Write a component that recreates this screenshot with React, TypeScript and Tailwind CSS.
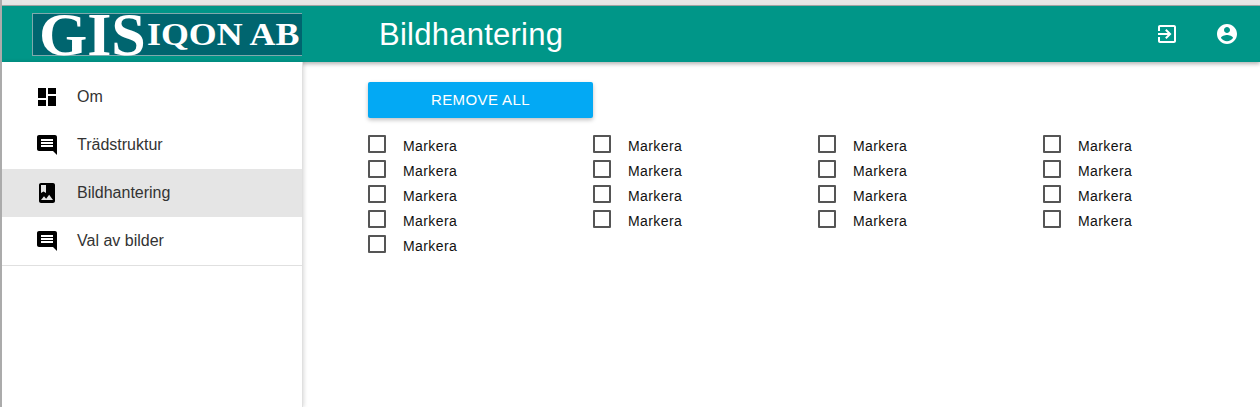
const dash = "M3 13h8V3H3v10zm0 8h8v-6H3v6zm10 0h8V11h-8v10zm0-18v6h8V3h-8z";
const msg = "M20 2H4c-1.1 0-1.99.9-1.99 2L2 22l4-4h14c1.1 0 2-.9 2-2V4c0-1.1-.9-2-2-2zm-2 12H6v-2h12v2zm0-3H6V9h12v2zm0-3H6V6h12v2z";
const album = "M18 2H6c-1.1 0-2 .9-2 2v16c0 1.1.9 2 2 2h12c1.1 0 2-.9 2-2V4c0-1.1-.9-2-2-2zM6 4h5v8l-2.5-1.5L6 12V4zm0 15l3-3.86 2.14 2.58 3-3.86L18 19H6z";
const exit = "M10.09 15.59L11.5 17l5-5-5-5-1.41 1.41L12.67 11H3v2h9.67l-2.58 2.59zM19 3H5c-1.11 0-2 .9-2 2v4h2V5h14v14H5v-4H3v4c0 1.1.89 2 2 2h14c1.1 0 2-.9 2-2V5c0-1.1-.9-2-2-2z";
const account = "M12 2C6.48 2 2 6.48 2 12s4.48 10 10 10 10-4.48 10-10S17.52 2 12 2zm0 3c1.66 0 3 1.34 3 3s-1.34 3-3 3-3-1.34-3-3 1.34-3 3-3zm0 14.2c-2.5 0-4.71-1.28-6-3.22.03-1.99 4-3.08 6-3.08 1.99 0 5.97 1.09 6 3.08-1.29 1.94-3.5 3.22-6 3.22z";

function Icon({ d, flip, cls }: { d: string; flip?: boolean; cls: string }) {
  return (
    <svg viewBox="0 0 24 24" className={`w-6 h-6 shrink-0 ${flip ? "-scale-x-100" : ""} ${cls}`} fill="currentColor">
      <path d={d} />
    </svg>
  );
}

const nav = [
  { label: "Om", d: dash, flip: false },
  { label: "Trädstruktur", d: msg, flip: true },
  { label: "Bildhantering", d: album, flip: false, active: true },
  { label: "Val av bilder", d: msg, flip: true },
];

export default function App() {
  return (
    <div className="h-[407px] w-[1260px] overflow-hidden bg-white flex flex-col border-l-2 border-[#ababab] font-['Liberation_Sans',sans-serif]">
      <div className="h-[6px] bg-[#e6e6e6] border-b border-[#a8a8a8] shrink-0" />
      <header className="relative z-10 h-[56px] shrink-0 bg-[#009688] flex items-center shadow-[0_2px_4px_rgba(0,0,0,0.3)]">
        <div className="ml-[30px] w-[270px] h-[43px] bg-[#00656f] border border-[#7fa9ad] border-r-0 flex items-center pl-[6px] font-['Liberation_Serif',serif] text-white whitespace-nowrap">
          <span className="text-[62px] font-bold leading-[41px]">GIS</span>
          <span className="text-[32px] leading-[41px] ml-[1px] origin-left scale-x-[1.12] font-bold">IQON AB</span>
        </div>
        <h1 className="ml-[77px] text-[31px] text-white leading-none tracking-[0.25px]">Bildhantering</h1>
        <div className="ml-auto flex items-center gap-[36px] pr-[21px] text-white">
          <Icon d={exit} cls="" />
          <Icon d={account} cls="" />
        </div>
      </header>
      <div className="flex flex-1 min-h-0">
        <aside className="relative z-20 w-[301px] border-r border-[#e0e0e0] shadow-[1px_0_4px_rgba(0,0,0,0.15)] bg-white pt-[11px] shrink-0">
          <nav className="border-b border-[#e0e0e0]">
            {nav.map((n) => (
              <div key={n.label} className={`h-[48px] flex items-center pl-[33px] ${n.active ? "bg-[#e5e5e5]" : ""}`}>
                <Icon d={n.d} flip={n.flip} cls="text-black" />
                <span className="ml-[18px] text-[16px] text-[#333]">{n.label}</span>
              </div>
            ))}
          </nav>
        </aside>
        <main className="pl-[65px] pt-[20px]">
          <button className="w-[225px] h-[36px] bg-[#03a9f4] rounded-[2px] text-white text-[15px] tracking-[0.4px] shadow-[0_2px_4px_rgba(0,0,0,0.25)]">
            REMOVE ALL
          </button>
          <div className="mt-[15px] grid grid-cols-[225px_225px_225px_225px]">
            {Array.from({ length: 17 }).map((_, i) => (
              <label key={i} className="h-[25px] flex items-center">
                <span className="w-[18px] h-[18px] border-2 border-[#555] rounded-[1px] shrink-0 -mt-[3px]" />
                <span className="ml-[17px] text-[14px] text-[#111] mt-[2px] tracking-[0.4px]">Markera</span>
              </label>
            ))}
          </div>
        </main>
      </div>
    </div>
  );
}
